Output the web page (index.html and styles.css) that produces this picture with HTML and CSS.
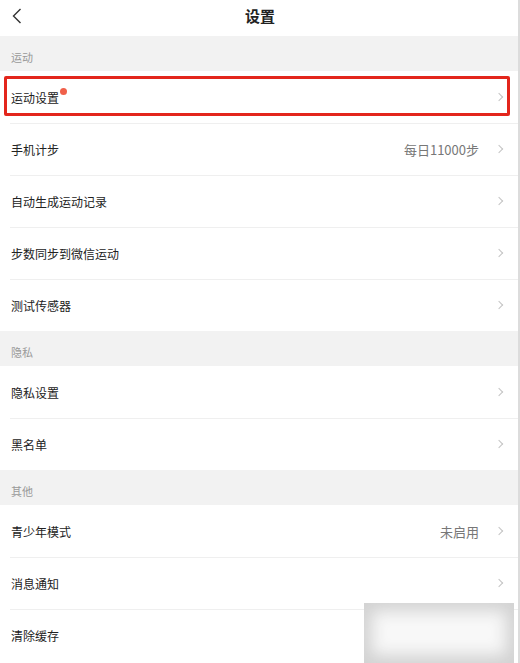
FILE: index.html
```html
<!DOCTYPE html>
<html lang="zh-CN">
<head>
    <meta charset="UTF-8">
    <meta name="viewport" content="width=device-width, initial-scale=1.0">
    <title>设置</title>
    <link rel="stylesheet" href="styles.css">
</head>
<body>
    <div class="page">
        <div class="topbar">
            <span class="back">
                <svg width="10" height="16" viewBox="0 0 10 16"><path d="M8.5 1 L1.5 8 L8.5 15" fill="none" stroke="#333" stroke-width="1.4"/></svg>
            </span>
            <h1>设置</h1>
        </div>

        <div class="section-title">运动</div>
        <div class="group">
            <div class="row highlight">
                <span class="label">运动设置<i class="dot"></i></span>
                <span class="arrow"></span>
            </div>
            <div class="row">
                <span class="label">手机计步</span>
                <span class="value">每日11000步</span>
                <span class="arrow"></span>
            </div>
            <div class="row">
                <span class="label">自动生成运动记录</span>
                <span class="arrow"></span>
            </div>
            <div class="row">
                <span class="label">步数同步到微信运动</span>
                <span class="arrow"></span>
            </div>
            <div class="row">
                <span class="label">测试传感器</span>
                <span class="arrow"></span>
            </div>
        </div>

        <div class="section-title">隐私</div>
        <div class="group">
            <div class="row">
                <span class="label">隐私设置</span>
                <span class="arrow"></span>
            </div>
            <div class="row">
                <span class="label">黑名单</span>
                <span class="arrow"></span>
            </div>
        </div>

        <div class="section-title">其他</div>
        <div class="group">
            <div class="row">
                <span class="label">青少年模式</span>
                <span class="value">未启用</span>
                <span class="arrow"></span>
            </div>
            <div class="row">
                <span class="label">消息通知</span>
                <span class="arrow"></span>
            </div>
            <div class="row">
                <span class="label">清除缓存</span>
            </div>
        </div>

        <div class="toast"></div>
    </div>
</body>
</html>
```

FILE: styles.css
```css
* {
    box-sizing: border-box;
}

body {
    margin: 0;
    background: #fff;
    font-family: "Noto Sans CJK SC", "Noto Sans", sans-serif;
    color: #333;
}

.page {
    position: relative;
    width: 520px;
    height: 663px;
    overflow: hidden;
    border-right: 2px solid #dcdcdc;
}

.topbar {
    height: 36px;
    display: flex;
    align-items: center;
    justify-content: center;
    position: relative;
    background: #fff;
}

.topbar h1 {
    margin: 0 0 0 2px;
    font-size: 15px;
    font-weight: bold;
    color: #222;
    line-height: 1;
    margin-top: -5px;
}

.back {
    position: absolute;
    left: 12px;
    top: 8px;
    display: flex;
}

.section-title {
    height: 35px;
    background: #f2f2f2;
    padding: 14px 0 0 11px;
    font-size: 11px;
    line-height: 14px;
    color: #999;
}

.group {
    background: #fff;
}

.row {
    position: relative;
    height: 52px;
    display: flex;
    align-items: center;
    padding: 0 14px 0 11px;
    font-size: 12px;
}

.row + .row::before {
    content: "";
    position: absolute;
    left: 10px;
    right: 0;
    top: 0;
    border-top: 1px solid #efefef;
}

.label {
    flex: 1;
    position: relative;
    color: #222;
}

.value {
    color: #777;
    margin-right: 17px;
    font-size: 13px;
}

.arrow {
    width: 6px;
    height: 6px;
    border-top: 1px solid #c4c4c4;
    border-right: 1px solid #c4c4c4;
    transform: rotate(45deg);
    margin-right: 2px;
}

.highlight::after {
    content: "";
    position: absolute;
    left: 4px;
    right: 8px;
    top: 5px;
    bottom: 7px;
    border: 3px solid #e3261c;
    border-radius: 2px;
}

.dot {
    position: absolute;
    top: -1px;
    margin-left: 1px;
    width: 7px;
    height: 7px;
    border-radius: 50%;
    background: #f0604a;
}

.toast {
    position: absolute;
    left: 364px;
    top: 603px;
    width: 150px;
    height: 60px;
    background: #f8f8f8;
    box-shadow: inset 0 0 16px 8px #d2d2d2;
}
```
